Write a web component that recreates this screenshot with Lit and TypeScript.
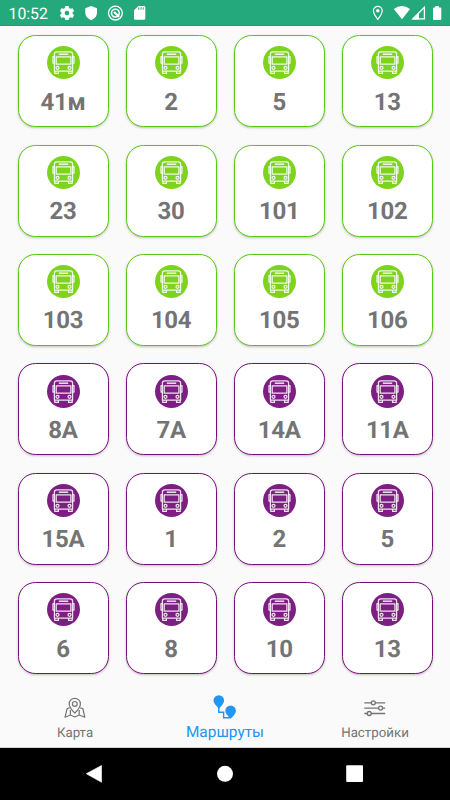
import { LitElement, html, css, svg } from "lit";
import { customElement, property } from "lit/decorators.js";

@customElement("route-card")
class RouteCard extends LitElement {
  @property() name = "";
  @property() kind = "green";

  static styles = css`
    :host { display: block; }
    .card {
      box-sizing: border-box;
      height: 92px;
      border: 1.3px solid #55cb0f;
      border-radius: 17.5px;
      background: #fff;
      color: #7ed31f;
      box-shadow: 0 1px 2.5px rgba(0, 0, 0, 0.24);
      display: flex;
      flex-direction: column;
      align-items: center;
      padding-top: 10.2px;
    }
    .purple { border-color: #75107a; color: #7d1f82; }
    svg { display: block; width: 33px; height: 33px; flex: none; }
    .label {
      font: 700 24px/28px Roboto, sans-serif;
      text-rendering: geometricPrecision;
      letter-spacing: -0.3px;
      color: #747474;
      margin-top: 8.1px;
      padding-right: 1px;
      white-space: nowrap;
    }
  `;

  render() {
    return html`<div class="card ${this.kind}">
      <svg viewBox="0 0 33 33">
        <circle cx="16.5" cy="16.5" r="16.5" fill="currentColor" />
        <g fill="none" stroke="#fff" stroke-opacity=".88" stroke-width="1.25" stroke-linejoin="round">
          <path d="M7.4 25.2V8Q7.4 5.8 9.8 5.8H23.2Q25.6 5.8 25.6 8V25.2Z" />
          <path d="M9.2 10.8H23.9V18.2H9.2Z" />
          <path d="M11.8 8.2H21.2" stroke-width="1.5" />
          <path d="M7.4 10.7H6V17H7.4M25.6 10.7H27V17H25.6" />
          <circle cx="10.5" cy="21.8" r="1.5" />
          <circle cx="22.5" cy="21.8" r="1.5" />
          <path d="M7.8 25.2V27.4H11.4V25.2M21.6 25.2V27.4H25.2V25.2" />
        </g>
      </svg>
      <div class="label">${this.name}</div>
    </div>`;
  }
}

const green = ["41м", "2", "5", "13", "23", "30", "101", "102", "103", "104", "105", "106"];
const purple = ["8А", "7А", "14А", "11А", "15А", "1", "2", "5", "6", "8", "10", "13"];

const statusLeft = svg`
  <g fill="#fff">
    <path fill-rule="evenodd" d="M65.4 6h3.2l.5 2 1.4.8 2-.6 1.6 2.7-1.5 1.4v1.5l1.5 1.4-1.6 2.7-2-.6-1.4.8-.5 2h-3.2l-.5-2-1.4-.8-2 .6-1.6-2.7 1.5-1.4v-1.5l-1.5-1.4 1.6-2.7 2 .6 1.4-.8ZM67 10.7a2.4 2.4 0 1 0 0 4.8a2.4 2.4 0 1 0 0-4.8" />
    <path d="M91.2 6 97 8.3V12.5Q97 17.8 91.2 20.3Q85.3 17.8 85.3 12.5V8.3Z" />
    <path d="M138.5 6H144Q145.3 6 145.3 7.3V18.5Q145.3 19.8 144 19.8H135.2Q134 19.8 134 18.5V10.3Z" />
  </g>
  <path d="M138.8 7.3v2.4M141 7.3v2.4M143.2 7.3v2.4" stroke="#23a97b" stroke-width="1" />
  <g fill="none" stroke="#fff">
    <circle cx="115.4" cy="13.1" r="6.9" stroke-width="1.3" />
    <circle cx="115.4" cy="13.1" r="3.9" stroke-width="1.5" />
    <path d="M114 12 119.2 16.8" stroke-width="2" />
  </g>`;

const statusRight = svg`
  <path d="M377.8 19.3Q373.4 13.8 373.4 10.8a4.4 4.4 0 0 1 8.8 0Q382.2 13.8 377.8 19.3Z" fill="none" stroke="#fff" stroke-width="1.2" />
  <circle cx="377.8" cy="10.7" r="1.7" fill="#fff" />
  <path d="M393.8 9Q402 2.9 410 9L402 19.2Z" fill="#fff" />
  <path d="M413 18.8 424.4 7.3V18.8Z" fill="none" stroke="#fff" stroke-width="1.3" />
  <path d="M412 19.4 419 12.5V19.4Z" fill="#fff" />
  <path d="M435.3 6h3.5v1.6h1.5q1 0 1 1V19q0 1-1 1h-6.3q-1 0-1-1V8.6q0-1 1-1h1.3Z" fill="#fff" />`;

@customElement("app-root")
class AppRoot extends LitElement {
  static styles = css`
    :host {
      display: flex;
      flex-direction: column;
      width: 450px;
      height: 800px;
      overflow: hidden;
      background: #fafafa;
      font-family: Roboto, sans-serif;
      text-rendering: geometricPrecision;
    }
    .status {
      box-sizing: border-box;
      height: 26px;
      flex: none;
      background: #24a97c;
      border-bottom: 1px solid #1e9d72;
      position: relative;
    }
    .clock { color: #fff; font-size: 15.8px; line-height: 27px; padding-left: 8.5px; height: 25px; }
    .status svg { position: absolute; left: 0; top: 0; width: 450px; height: 26px; }
    .grid {
      box-sizing: border-box;
      flex: none;
      height: 657px;
      padding: 9.3px 17px 0 18px;
      display: grid;
      grid-template-columns: repeat(4, 91px);
      grid-auto-rows: 92px;
      column-gap: 17.1px;
      row-gap: 17.4px;
    }
    .tabs {
      box-sizing: border-box;
      height: 65px;
      flex: none;
      display: grid;
      grid-template-columns: repeat(3, 1fr);
      color: #747474;
      font-size: 13.3px;
      border-bottom: 1px solid #d4d4d4;
    }
    .tab { display: flex; flex-direction: column; align-items: center; padding-top: 12px; }
    .tab svg { display: block; width: 26px; height: 26px; }
    .tab span { line-height: 16px; margin-top: 5px; }
    .active { color: #2196f3; font-size: 15.4px; padding-top: 10px; }
    .active span { margin-top: 5px; }
    .nav { flex: 1; background: #000; }
    .nav svg { display: block; width: 450px; height: 52px; }
  `;

  render() {
    return html`
      <div class="status">
        <div class="clock">10:52</div>
        <svg viewBox="0 0 450 26">${statusLeft}${statusRight}</svg>
      </div>
      <div class="grid">
        ${green.map((n) => html`<route-card name=${n}></route-card>`)}
        ${purple.map((n) => html`<route-card name=${n} kind="purple"></route-card>`)}
      </div>
      <div class="tabs">
        <div class="tab">
          <svg viewBox="0 0 26 26" fill="none" stroke="currentColor" stroke-width="1.2" stroke-linejoin="round">
            <path d="M12.8 18.2Q7.2 12.3 7.2 8.9a5.6 5.6 0 0 1 11.2 0Q18.4 12.3 12.8 18.2Z" />
            <circle cx="12.8" cy="8.9" r="2.4" />
            <path d="M7.6 12.8 5.2 13.5 3 22.2 8.4 20 12.8 22 17.2 20 22.8 22.2 20.8 13.5 18.2 12.8M8.4 20V15M17.2 20V15" />
          </svg>
          <span>Карта</span>
        </div>
        <div class="tab active">
          <svg viewBox="0 0 26 26" fill="currentColor">
            <path d="M7 15.5Q1.5 10.5 1.5 7.5a5.3 5.3 0 0 1 10.6 0Q12.1 10.5 7 15.5Z" />
            <path d="M18.7 25.8Q13.3 20.7 13.3 17.7a5.3 5.3 0 0 1 10.6 0Q23.9 20.7 18.7 25.8Z" />
            <path d="M6.8 14V19.2H11.6V24.8H18.6" fill="none" stroke="currentColor" stroke-width="1.4" />
          </svg>
          <span>Маршруты</span>
        </div>
        <div class="tab">
          <svg viewBox="0 0 26 26" fill="#fafafa" stroke="currentColor" stroke-width="1.3">
            <path d="M2.3 7.8H23.2M2.3 13.1H23.2M2.3 18.5H23.2" />
            <circle cx="11.3" cy="7.8" r="2" />
            <circle cx="18.6" cy="13.1" r="2" />
            <circle cx="7.3" cy="18.5" r="2" />
          </svg>
          <span>Настройки</span>
        </div>
      </div>
      <div class="nav">
        <svg viewBox="0 0 450 52" fill="#fff">
          <path d="M86.3 25.7 101.5 17.5V34.3Z" stroke="#fff" stroke-width=".6" stroke-linejoin="round" />
          <circle cx="225" cy="25.8" r="8" />
          <rect x="346.2" y="17.3" width="16.8" height="16.8" rx="1" />
        </svg>
      </div>
    `;
  }
}
